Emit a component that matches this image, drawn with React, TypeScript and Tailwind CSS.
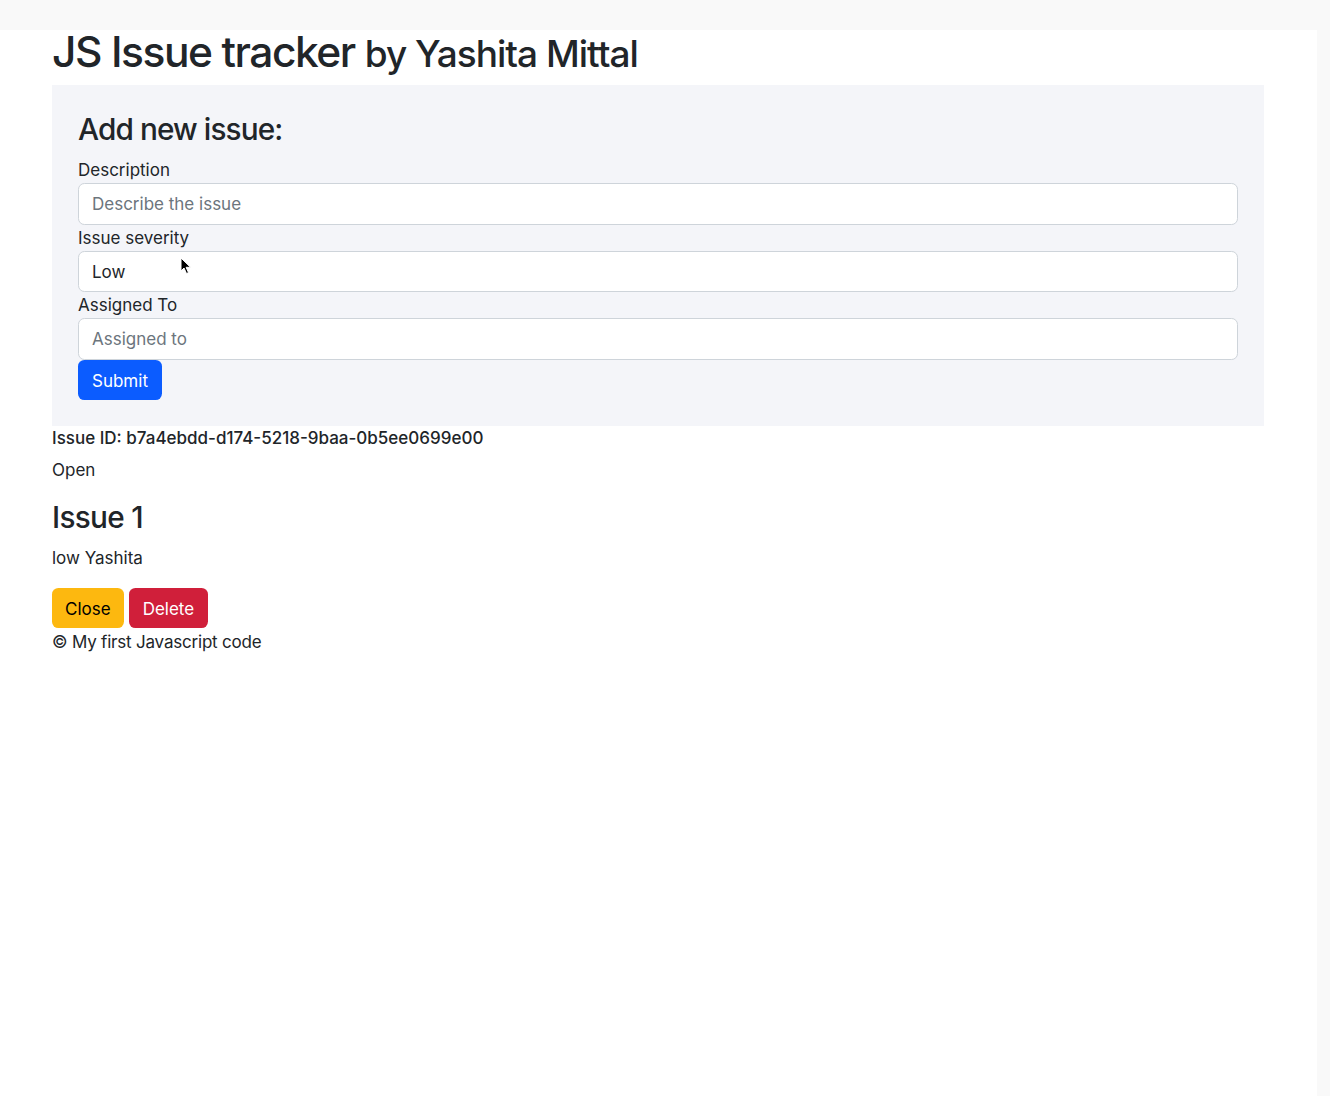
import React from 'react';

const font = { fontFamily: 'Inter, "Noto Sans", "Liberation Sans", sans-serif' };

const btn = 'h-[40px] rounded-[6.4px] pt-[2px] text-[17px] leading-[38px]';

const Field: React.FC<{ label: string; placeholder?: string; value?: string }> = ({ label, placeholder, value }) => (
  <div>
    <label className="block text-[17px] leading-[26px] text-[#212529]">{label}</label>
    <input
      type="text"
      readOnly
      placeholder={placeholder}
      defaultValue={value}
      className="block w-full h-[41.5px] rounded-[6.4px] border border-[#ced4da] bg-white px-[13px] pt-[1px] text-[17px] text-[#212529] placeholder:text-[#6c757d] outline-none"
    />
  </div>
);

const Cursor: React.FC = () => (
  <svg className="absolute left-[180px] top-[257px] pointer-events-none" width="12" height="18" viewBox="0 0 12 18">
    <path d="M1 1 L1 14 L4 11 L6.5 16.5 L8.5 15.6 L6.1 10.3 L10.5 10.3 Z" fill="#000" stroke="#fff" strokeWidth="1" />
  </svg>
);

const App: React.FC = () => {
  return (
    <div className="relative min-h-[1096px] bg-[#f9f9f9] pt-[30px] pr-[13px] flex" style={font}>
      <div className="flex-1 bg-white">
        <div className="w-[1212px] ml-[52px] text-[#212529]">
          <h1 className="h-[55px] text-[42.5px] leading-[43px] font-medium tracking-[-1.45px] whitespace-nowrap">
            JS Issue tracker{' '}
            <span className="text-[37px] tracking-[-1px]">by Yashita Mittal</span>
          </h1>

          <div className="bg-[#f4f5f9] px-[26px] pt-[27px] pb-[26px]">
            <h3 className="text-[29.75px] leading-[35.7px] font-medium mb-[9.5px] tracking-[-0.9px]">Add new issue:</h3>
            <form onSubmit={(e) => e.preventDefault()}>
              <Field label="Description" placeholder="Describe the issue" />
              <Field label="Issue severity" value="Low" />
              <Field label="Assigned To" placeholder="Assigned to" />
              <button type="submit" className={`block bg-[#0b5cff] px-[14px] text-white ${btn}`}>
                Submit
              </button>
            </form>
          </div>

          <div className="mt-[2px]">
            <h6 className="text-[17px] leading-[20.4px] font-medium mb-[9.5px]">Issue ID: b7a4ebdd-d174-5218-9baa-0b5ee0699e00</h6>
            <p className="text-[17px] leading-[25.5px] mb-[17px]">Open</p>
            <h3 className="text-[29.75px] leading-[35.7px] font-medium mb-[10px] tracking-[-0.7px]">Issue 1</h3>
            <p className="text-[17px] leading-[25.5px] mb-[17px]">low Yashita</p>
            <div className="flex gap-[5px]">
              <button className={`bg-[#fdb80f] px-[13px] text-black ${btn}`}>Close</button>
              <button className={`bg-[#d01f3a] px-[14px] text-white ${btn}`}>Delete</button>
            </div>
            <p className="mt-[2px] text-[17px] leading-[25.5px] tracking-[-0.2px]">© My first Javascript code</p>
          </div>
        </div>
      </div>
      <Cursor />
    </div>
  );
};

export default App;
